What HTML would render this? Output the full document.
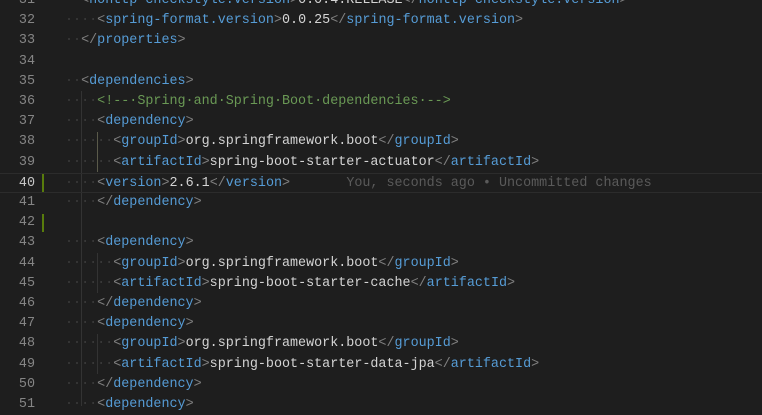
<!DOCTYPE html>
<html><head><meta charset="utf-8"><style>
body{margin:0;background:#1e1e1e;width:762px;height:406px;overflow:hidden;position:relative;font-family:"Liberation Mono",monospace;font-size:13.4px}
.l{position:absolute;left:0;height:20.2px;line-height:20.2px;width:762px;white-space:pre}
.n{position:absolute;right:727px;color:#858585;text-align:right}
.c{position:absolute;left:65px;color:#d4d4d4}
.b{color:#808080}.t{color:#569cd6}.m{color:#6a9955}.d{color:#3b3b3b}.g{color:#5a5a5a}
.act .n{color:#c6c6c6}
.hl{border-top:1px solid #2c2c2c;border-bottom:1px solid #2c2c2c;box-sizing:border-box}
.bar{position:absolute;left:42px;width:2px;height:18px;background:#587c0c}
.guide{position:absolute;width:1px;background:#333}
</style></head><body>
<div class="guide" style="left:81px;top:91px;height:315px"></div>
<div class="guide" style="left:97px;top:132px;height:40px;background:#5a5a4a"></div>
<div class="guide" style="left:97px;top:253px;height:40px"></div>
<div class="guide" style="left:97px;top:334px;height:40px"></div>
<script>
const L=[
[31,'<span class="d">··</span><span class="b">&lt;</span><span class="t">nohttp-checkstyle.version</span><span class="b">&gt;</span>0.0.4.RELEASE<span class="b">&lt;/</span><span class="t">nohttp-checkstyle.version</span><span class="b">&gt;</span>'],
[32,'<span class="d">····</span><span class="b">&lt;</span><span class="t">spring-format.version</span><span class="b">&gt;</span>0.0.25<span class="b">&lt;/</span><span class="t">spring-format.version</span><span class="b">&gt;</span>'],
[33,'<span class="d">··</span><span class="b">&lt;/</span><span class="t">properties</span><span class="b">&gt;</span>'],
[34,''],
[35,'<span class="d">··</span><span class="b">&lt;</span><span class="t">dependencies</span><span class="b">&gt;</span>'],
[36,'<span class="d">····</span><span class="m">&lt;!--·Spring·and·Spring·Boot·dependencies·--&gt;</span>'],
[37,'<span class="d">····</span><span class="b">&lt;</span><span class="t">dependency</span><span class="b">&gt;</span>'],
[38,'<span class="d">······</span><span class="b">&lt;</span><span class="t">groupId</span><span class="b">&gt;</span>org.springframework.boot<span class="b">&lt;/</span><span class="t">groupId</span><span class="b">&gt;</span>'],
[39,'<span class="d">······</span><span class="b">&lt;</span><span class="t">artifactId</span><span class="b">&gt;</span>spring-boot-starter-actuator<span class="b">&lt;/</span><span class="t">artifactId</span><span class="b">&gt;</span>'],
[40,'<span class="d">····</span><span class="b">&lt;</span><span class="t">version</span><span class="b">&gt;</span>2.6.1<span class="b">&lt;/</span><span class="t">version</span><span class="b">&gt;</span>       <span class="g">You, seconds ago • Uncommitted changes</span>'],
[41,'<span class="d">····</span><span class="b">&lt;/</span><span class="t">dependency</span><span class="b">&gt;</span>'],
[42,''],
[43,'<span class="d">····</span><span class="b">&lt;</span><span class="t">dependency</span><span class="b">&gt;</span>'],
[44,'<span class="d">······</span><span class="b">&lt;</span><span class="t">groupId</span><span class="b">&gt;</span>org.springframework.boot<span class="b">&lt;/</span><span class="t">groupId</span><span class="b">&gt;</span>'],
[45,'<span class="d">······</span><span class="b">&lt;</span><span class="t">artifactId</span><span class="b">&gt;</span>spring-boot-starter-cache<span class="b">&lt;/</span><span class="t">artifactId</span><span class="b">&gt;</span>'],
[46,'<span class="d">····</span><span class="b">&lt;/</span><span class="t">dependency</span><span class="b">&gt;</span>'],
[47,'<span class="d">····</span><span class="b">&lt;</span><span class="t">dependency</span><span class="b">&gt;</span>'],
[48,'<span class="d">······</span><span class="b">&lt;</span><span class="t">groupId</span><span class="b">&gt;</span>org.springframework.boot<span class="b">&lt;/</span><span class="t">groupId</span><span class="b">&gt;</span>'],
[49,'<span class="d">······</span><span class="b">&lt;</span><span class="t">artifactId</span><span class="b">&gt;</span>spring-boot-starter-data-jpa<span class="b">&lt;/</span><span class="t">artifactId</span><span class="b">&gt;</span>'],
[50,'<span class="d">····</span><span class="b">&lt;/</span><span class="t">dependency</span><span class="b">&gt;</span>'],
[51,'<span class="d">····</span><span class="b">&lt;</span><span class="t">dependency</span><span class="b">&gt;</span>']];
let h='';
for(const [n,c] of L){const top=-9+(n-31)*20.2;
h+=`<div class="l${n==40?' act hl':''}" style="top:${top}px"><span class="n">${n}</span><span class="c">${c}</span></div>`;
if(n==40||n==42)h+=`<div class="bar" style="top:${top+1}px"></div>`;}
document.write(h);
</script>
</body></html>
